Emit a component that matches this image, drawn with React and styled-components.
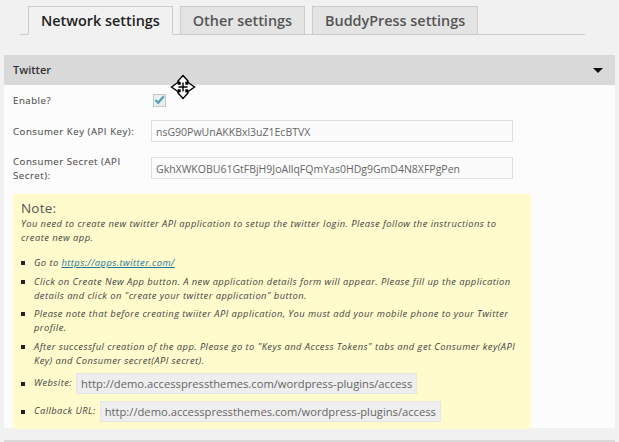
import React from "react";
import styled, { createGlobalStyle } from "styled-components";

const Global = createGlobalStyle`
  html, body { margin: 0; padding: 0; background: #f1f1f1; }
  body { font-family: "Open Sans", sans-serif; color: #444; overflow: hidden; }
  #root { height: 442px; }
`;

const Page = styled.div`
  position: relative;
  width: 619px;
  height: 442px;
  overflow: hidden;
  padding: 6px 4px 0;
  box-sizing: border-box;
`;

const Tabs = styled.div`
  display: flex;
  gap: 7px;
  margin: 0 30px 0 16px;
  padding-left: 8px;
  height: 28px;
  border-bottom: 1px solid #ccc;
`;

const Tab = styled.div`
  height: ${(p) => (p.$active ? "29px" : "28px")};
  padding: 0 12px;
  box-sizing: border-box;
  border: 1px solid #ccc;
  border-bottom: ${(p) => (p.$active ? "1px solid #f1f1f1" : "none")};
  background: ${(p) => (p.$active ? "#f1f1f1" : "#e4e4e4")};
  color: ${(p) => (p.$active ? "#222" : "#555")};
  font-size: 14.4px;
  font-weight: 600;
  line-height: 27px;
  white-space: nowrap;
`;

const Panel = styled.section`
  width: 611px;
  margin-top: 20px;
`;

const PanelHead = styled.div`
  height: 30px;
  background: #d9d9d9;
  display: flex;
  align-items: center;
  justify-content: space-between;
  padding: 0 12px 0 9px;
  font-size: 11px;
  font-weight: 600;
  color: #333;
`;

const PanelTitle = styled.span`
  line-height: 30px;
  height: 30px;
`;

const Caret = styled.span`
  width: 0;
  height: 0;
  border-left: 5px solid transparent;
  border-right: 5px solid transparent;
  border-top: 5px solid #111;
`;

const PanelBody = styled.div`
  height: 343px;
  box-sizing: border-box;
  background: #fcfcfc;
  padding: 7px 0 0 9px;
`;

const Row = styled.div`
  display: grid;
  grid-template-columns: 138px 362px;
  align-items: center;
  min-height: ${(p) => p.$h}px;
  margin-bottom: ${(p) => p.$mb}px;
`;

const Label = styled.label`
  padding-top: 2px;
  font-size: 9.6px;
  font-weight: 400;
  line-height: 14px;
  letter-spacing: 0.55px;
  color: #555;
  -webkit-text-stroke: 0.15px #555;
`;

const Check = styled.span`
  width: 11px;
  height: 11px;
  margin-left: 2px;
  border: 1px solid #bcc8cc;
  background: #e9eef0;
  display: flex;
  align-items: center;
  justify-content: center;
`;

const Field = styled.input`
  width: 362px;
  height: 22px;
  box-sizing: border-box;
  border: 1px solid #ddd;
  background: #fbfbfb;
  padding: 2px 4px 0;
  font-family: "Open Sans", sans-serif;
  font-size: 10.5px;
  color: #666;
  outline: none;
`;

const Note = styled.div`
  width: 518px;
  height: 235px;
  box-sizing: border-box;
  margin-top: 11px;
  background: #fffbcc;
  padding: 6px 14px 0 8px;
  font-size: 9.4px;
  font-style: italic;
  line-height: 14px;
  letter-spacing: 0.43px;
  color: #444;
`;

const NoteTitle = styled.div`
  font-size: 13.5px;
  font-style: normal;
  line-height: 17px;
  letter-spacing: 0.2px;
  color: #555;
`;

const List = styled.ul`
  list-style: none;
  margin: 11px 0 0;
  padding: 0;
`;

const Item = styled.li`
  position: relative;
  padding-left: 13px;
  margin-bottom: 4.5px;
  &::before {
    content: "";
    position: absolute;
    left: 0;
    top: 5px;
    width: 4px;
    height: 4px;
    background: #222;
  }
`;

const UrlItem = styled(Item)`
  display: flex;
  align-items: center;
  gap: 4px;
  margin: 5px 0 7px;
  &::before {
    top: 9px;
  }
`;

const Link = styled.a`
  color: #21759b;
  text-decoration: underline;
`;

const UrlBox = styled.span`
  display: block;
  background: #eee;
  border: 1px solid #e6e6e6;
  height: 21px;
  box-sizing: border-box;
  padding: 0 4px;
  font-size: 11.2px;
  font-style: normal;
  line-height: 20px;
  letter-spacing: 0;
  color: #666;
  white-space: nowrap;
`;

const NextPanel = styled.div`
  width: 611px;
  height: 12px;
  margin-top: 12px;
  background: #d9d9d9;
`;

const Cursor = styled.svg`
  position: absolute;
  left: 170px;
  top: 74px;
`;

export default function App() {
  return (
    <Page>
      <Global />
      <Tabs>
        <Tab $active>Network settings</Tab>
        <Tab>Other settings</Tab>
        <Tab>BuddyPress settings</Tab>
      </Tabs>
      <Panel>
        <PanelHead>
          <PanelTitle>Twitter</PanelTitle>
          <Caret />
        </PanelHead>
        <PanelBody>
          <Row $h={15} $mb={12}>
            <Label>Enable?</Label>
            <Check>
              <svg width="11" height="10" viewBox="0 0 11 10">
                <path d="M1.5 5 L4.2 7.8 L9.8 1.2" fill="none" stroke="#5b9fb5" strokeWidth="2.2" />
              </svg>
            </Check>
          </Row>
          <Row $h={22} $mb={11}>
            <Label>Consumer Key (API Key):</Label>
            <Field readOnly value="nsG90PwUnAKKBxl3uZ1EcBTVX" />
          </Row>
          <Row $h={30} $mb={0}>
            <Label>Consumer Secret (API Secret):</Label>
            <Field readOnly value="GkhXWKOBU61GtFBjH9JoAllqFQmYas0HDg9GmD4N8XFPgPen" />
          </Row>
          <Note>
            <NoteTitle>Note:</NoteTitle>
            You need to create new twitter API application to setup the twitter login. Please follow the instructions to create new app.
            <List>
              <Item>Go to <Link href="#">https://apps.twitter.com/</Link></Item>
              <Item>Click on Create New App button. A new application details form will appear. Please fill up the application details and click on "create your twitter application" button.</Item>
              <Item>Please note that before creating twiiter API application, You must add your mobile phone to your Twitter profile.</Item>
              <Item>After successful creation of the app. Please go to "Keys and Access Tokens" tabs and get Consumer key(API Key) and Consumer secret(API secret).</Item>
              <UrlItem>Website: <UrlBox>http://demo.accesspressthemes.com/wordpress-plugins/access</UrlBox></UrlItem>
              <UrlItem>Callback URL: <UrlBox>http://demo.accesspressthemes.com/wordpress-plugins/access</UrlBox></UrlItem>
            </List>
          </Note>
        </PanelBody>
      </Panel>
      <NextPanel />
      <Cursor width="26" height="26" viewBox="0 0 26 26">
        <path
          d="M13 1.5 L18 7 V8.5 H16 V10 H17.5 V8 L24.5 13 L17.5 18 V16 H16 V17.5 H18 V19 L13 24.5 L8 19 V17.5 H10 V16 H8.5 V18 L1.5 13 L8.5 8 V10 H10 V8.5 H8 V7 Z"
          fill="#fff"
          stroke="#000"
          strokeWidth="1.4"
          strokeLinejoin="miter"
        />
        <path d="M13 8.5 V17.5 M8.5 13 H17.5" fill="none" stroke="#000" strokeWidth="1.4" />
      </Cursor>
    </Page>
  );
}
